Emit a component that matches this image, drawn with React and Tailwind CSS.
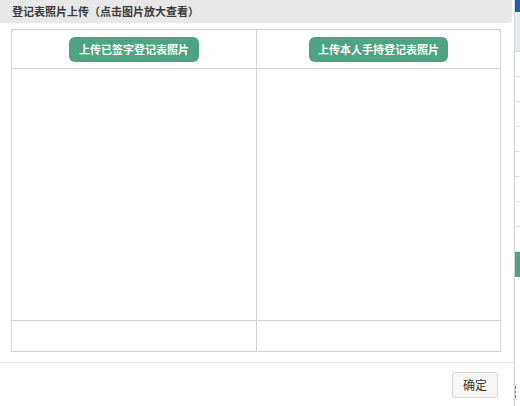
export default function App() {
  return (
    <div
      className="flex w-[520px] h-[406px] bg-white overflow-hidden"
      style={{ fontFamily: '"Noto Sans CJK SC", "Microsoft YaHei", sans-serif' }}
    >
      <div className="flex flex-col w-[514px] shrink-0 bg-white">
        <div className="h-[23px] mr-[2px] bg-[#e8e8e8] rounded-br-[3px] flex items-center pl-[12px] text-[11px] font-semibold text-[#3a3a3a]">
          登记表照片上传（点击图片放大查看）
        </div>

        <div className="mx-[11px] mt-[6px] w-[490px] border border-[#d5d5d5] grid grid-cols-[245px_1fr]">
          <div className="h-[39px] border-b border-r border-[#d5d5d5] flex items-center justify-center">
            <button className="h-[25px] px-[10px] rounded-[6px] bg-[#4fa383] text-white text-[11px] font-semibold">
              上传已签字登记表照片
            </button>
          </div>
          <div className="h-[39px] border-b border-[#d5d5d5] flex items-center justify-center">
            <button className="h-[25px] px-[9px] rounded-[6px] bg-[#4fa383] text-white text-[11px] font-semibold">
              上传本人手持登记表照片
            </button>
          </div>
          <div className="h-[252px] border-b border-r border-[#d5d5d5]" />
          <div className="h-[252px] border-b border-[#d5d5d5]" />
          <div className="h-[30px] border-r border-[#d5d5d5]" />
          <div className="h-[30px]" />
        </div>

        <div className="mt-[10px] border-t border-[#e5e5e5] flex justify-end pr-[16px] pt-[9px]">
          <button className="w-[46px] h-[26px] border border-[#d9d9d9] rounded-[3px] bg-[#f7f7f7] text-[12px] text-[#333]">
            确定
          </button>
        </div>
      </div>

      <div className="flex-1 flex flex-col border-l border-[#cfd6df] bg-white">
        <div className="h-[12px] bg-[#1f5fb0]" />
        <div className="h-[40px] bg-[#e6ebf3] border-b border-[#d9d9d9]" />
        <div className="h-[25px] border-b border-[#e2e2e2]" />
        <div className="h-[25px] border-b border-[#e2e2e2]" />
        <div className="h-[25px] border-b border-[#e2e2e2]" />
        <div className="h-[25px] border-b border-[#e2e2e2]" />
        <div className="h-[25px] border-b border-[#e2e2e2]" />
        <div className="h-[25px] border-b border-[#e2e2e2]" />
        <div className="h-[25px] border-b border-[#e2e2e2]" />
        <div className="h-[25px] border-b border-[#e2e2e2]" />
        <div className="h-[25px] bg-[#4fa383]" />
        <div className="flex-1 flex items-end pb-[8px]">
          <div className="w-[4px] h-[12px] border-l border-dashed border-[#e05555]" />
        </div>
      </div>
    </div>
  );
}
